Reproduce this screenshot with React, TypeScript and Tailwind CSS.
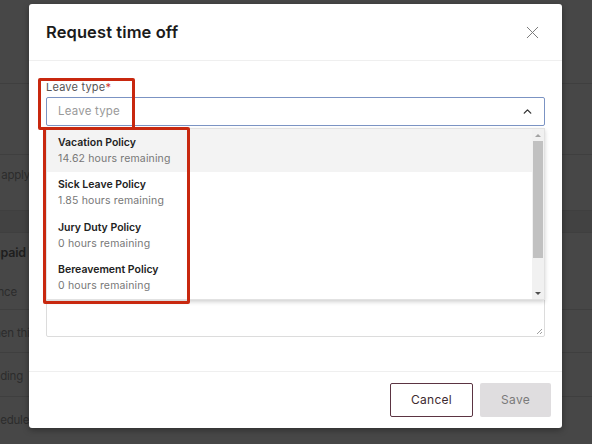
import { X, ChevronUp } from "lucide-react";

const policies = [
  { name: "Vacation Policy", remaining: "14.62 hours remaining" },
  { name: "Sick Leave Policy", remaining: "1.85 hours remaining" },
  { name: "Jury Duty Policy", remaining: "0 hours remaining" },
  { name: "Bereavement Policy", remaining: "0 hours remaining" },
];

function Backdrop() {
  // page behind the modal, dimmed
  return (
    <div className="flex flex-col h-[444px] bg-[#474747] text-[11.5px] tracking-[-0.2px] text-[#2c2c2c] whitespace-nowrap">
      <div className="h-[84px] border-b border-[#3f3f3f]" />
      <div className="h-[71px] border-b border-[#3f3f3f]" />
      <div className="h-[56px] border-b border-[#3f3f3f] flex items-center pb-[14px]">
        <span className="-ml-[12px]">to apply</span>
      </div>
      <div className="h-[22px] bg-[#424242] border-b border-[#3f3f3f]" />
      <div className="h-[77px] border-b border-[#3f3f3f] flex flex-col justify-between pt-[11px] pb-[8px]">
        <span className="-ml-[16px] font-semibold text-[12.5px] text-[#1e1e1e]">Unpaid Time</span>
        <span className="-ml-[25px]">Balance</span>
      </div>
      <div className="h-[43px] border-b border-[#3f3f3f] flex items-center pt-[5px]">
        <span className="-ml-[15px]">when this</span>
      </div>
      <div className="h-[44px] border-b border-[#3f3f3f] flex items-center pt-[4px]">
        <span className="-ml-[20px]">Pending</span>
      </div>
      <div className="flex-1 flex items-center">
        <span className="-ml-[20px]">Scheduled</span>
      </div>
    </div>
  );
}

export default function App() {
  return (
    <div
      className="relative w-[592px] h-[444px] overflow-hidden"
      style={{ fontFamily: "Inter, 'Noto Sans', sans-serif" }}
    >
      <Backdrop />

      {/* MODAL */}
      <div className="absolute left-[29px] top-[4px] w-[533px] h-[424px] bg-white rounded-[3px] shadow-[0_2px_6px_rgba(0,0,0,0.35)] flex flex-col">
        <div className="h-[57px] shrink-0 flex items-center justify-between pl-[17px] pr-[19px] border-b border-[#efefef]">
          <h2 className="text-[16.5px] font-semibold text-[#1b1b1b] tracking-[0.1px]">
            Request time off
          </h2>
          <X size={21} strokeWidth={1.1} className="text-[#777]" />
        </div>

        <div className="flex-1 px-[17px] pt-[19px] flex flex-col">
          <label className="text-[11px] leading-[14px] text-[#555] tracking-[0.2px]">
            Leave type<span className="text-[#d0342c]">*</span>
          </label>
          <div className="mt-[3px] h-[29px] border border-[#7b93c3] rounded-[2px] flex items-center justify-between pl-[11px] pr-[10px]">
            <span className="text-[11.5px] text-[#9a9a9a] tracking-[0.2px] pt-[1px]">Leave type</span>
            <ChevronUp size={13} strokeWidth={2.5} className="text-[#333]" />
          </div>

          {/* fields hidden under the open menu */}
          <div className="mt-[36px] h-[30px] border border-[#dcdcdc] rounded-[2px]" />
          <div className="mt-[75px] h-[70px] border border-[#dcdcdc] rounded-[2px] relative">
            <svg className="absolute right-[1px] bottom-[1px]" width="7" height="7" viewBox="0 0 7 7">
              <path d="M6 1 L1 6 M6 4 L4 6" stroke="#888" strokeWidth="0.8" />
            </svg>
          </div>
        </div>

        <div className="h-[57px] shrink-0 border-t border-[#efefef] flex items-start justify-end gap-[7px] pt-[11px] pr-[11px]">
          <button className="w-[83px] h-[34px] border border-[#5b3442] rounded-[2px] text-[12px] text-[#3d2a30] tracking-[0.3px]">
            Cancel
          </button>
          <button className="w-[71px] h-[34px] bg-[#dfdddf] rounded-[2px] text-[12px] text-[#7a7a7a] tracking-[0.3px]">
            Save
          </button>
        </div>
      </div>

      {/* DROPDOWN MENU */}
      <div className="absolute left-[46px] top-[128px] w-[499px] h-[172px] bg-white border border-[#e2e2e2] shadow-[0_2px_4px_rgba(0,0,0,0.18)] flex">
        <div className="flex-1 flex flex-col">
          {policies.map((p, i) => (
            <div
              key={p.name}
              className={`h-[43px] flex flex-col justify-center pl-[11px] pt-[1px] gap-[4px] ${
                i === 0 ? "bg-[#f3f3f3]" : "bg-white"
              }`}
            >
              <span className="text-[10.5px] leading-[12px] font-semibold text-[#222]">
                {p.name}
              </span>
              <span className="text-[10.5px] leading-[12px] text-[#777] tracking-[0.15px]">
                {p.remaining}
              </span>
            </div>
          ))}
        </div>
        {/* scrollbar */}
        <div className="w-[12px] bg-[#f1f1f1] flex flex-col items-center">
          <div className="h-[12px] flex items-center justify-center">
            <div className="w-0 h-0 border-l-[3px] border-r-[3px] border-b-[3px] border-l-transparent border-r-transparent border-b-[#a3a3a3]" />
          </div>
          <div className="w-[10px] h-[117px] bg-[#c1c1c1]" />
          <div className="flex-1" />
          <div className="h-[12px] flex items-center justify-center">
            <div className="w-0 h-0 border-l-[3px] border-r-[3px] border-t-[3px] border-l-transparent border-r-transparent border-t-[#505050]" />
          </div>
        </div>
      </div>

      {/* ANNOTATION BOXES */}
      <div className="absolute left-[38px] top-[78px] w-[97px] h-[52px] border-[3px] border-[#c8280f] rounded-[2px]" />
      <div className="absolute left-[43px] top-[127px] w-[147px] h-[177px] border-[3px] border-[#c8280f] rounded-[2px]" />
    </div>
  );
}
